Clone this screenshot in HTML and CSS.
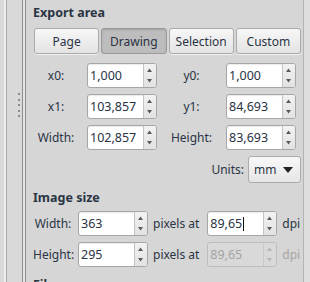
FILE: index.html
```html
<!DOCTYPE html>
<html lang="en">
<head>
<meta charset="UTF-8" />
<title>Export PNG Image</title>
<link rel="stylesheet" href="styles.css">
</head>
<body>
<div class="window">
  <div class="edge"></div>
  <div class="handle">
    <span></span><span></span><span></span><span></span><span></span>
  </div>
  <div class="divider"></div>
  <div class="panel">
    <h2>Export area</h2>
    <div class="modes">
      <button>Page</button>
      <button class="on">Drawing</button>
      <button>Selection</button>
      <button>Custom</button>
    </div>

    <div class="coords">
      <label>x0:</label>
      <div class="spin"><span class="val">1,000</span><span class="arrows"><svg width="12" height="23" viewBox="0 0 12 23"><path d="M3 8 L5.5 4.5 L8 8Z M3 15 L5.5 18.5 L8 15Z"/></svg></span></div>
      <label>y0:</label>
      <div class="spin"><span class="val">1,000</span><span class="arrows"><svg width="12" height="23" viewBox="0 0 12 23"><path d="M3 8 L5.5 4.5 L8 8Z M3 15 L5.5 18.5 L8 15Z"/></svg></span></div>

      <label>x1:</label>
      <div class="spin"><span class="val">103,857</span><span class="arrows"><svg width="12" height="23" viewBox="0 0 12 23"><path d="M3 8 L5.5 4.5 L8 8Z M3 15 L5.5 18.5 L8 15Z"/></svg></span></div>
      <label>y1:</label>
      <div class="spin"><span class="val">84,693</span><span class="arrows"><svg width="12" height="23" viewBox="0 0 12 23"><path d="M3 8 L5.5 4.5 L8 8Z M3 15 L5.5 18.5 L8 15Z"/></svg></span></div>

      <label>Width:</label>
      <div class="spin"><span class="val">102,857</span><span class="arrows"><svg width="12" height="23" viewBox="0 0 12 23"><path d="M3 8 L5.5 4.5 L8 8Z M3 15 L5.5 18.5 L8 15Z"/></svg></span></div>
      <label>Height:</label>
      <div class="spin"><span class="val">83,693</span><span class="arrows"><svg width="12" height="23" viewBox="0 0 12 23"><path d="M3 8 L5.5 4.5 L8 8Z M3 15 L5.5 18.5 L8 15Z"/></svg></span></div>
    </div>

    <div class="units">
      <label>Units:</label>
      <div class="combo">mm <svg width="10" height="6" viewBox="0 0 10 6"><path d="M0 0 L10 0 L5 6Z"/></svg></div>
    </div>

    <h2 class="second">Image size</h2>
    <div class="size">
      <label>Width:</label>
      <div class="spin"><span class="val">363</span><span class="arrows"><svg width="12" height="23" viewBox="0 0 12 23"><path d="M3 8 L5.5 4.5 L8 8Z M3 15 L5.5 18.5 L8 15Z"/></svg></span></div>
      <span>pixels at</span>
      <div class="spin"><span class="val">89,65<i class="caret"></i></span><span class="arrows"><svg width="12" height="23" viewBox="0 0 12 23"><path d="M3 8 L5.5 4.5 L8 8Z M3 15 L5.5 18.5 L8 15Z"/></svg></span></div>
      <span>dpi</span>

      <label>Height:</label>
      <div class="spin"><span class="val">295</span><span class="arrows"><svg width="12" height="23" viewBox="0 0 12 23"><path d="M3 8 L5.5 4.5 L8 8Z M3 15 L5.5 18.5 L8 15Z"/></svg></span></div>
      <span>pixels at</span>
      <div class="spin off"><span class="val">89,65</span><span class="arrows"><svg width="12" height="23" viewBox="0 0 12 23"><path d="M3 8 L5.5 4.5 L8 8Z M3 15 L5.5 18.5 L8 15Z"/></svg></span></div>
      <span class="dim">dpi</span>
    </div>

    <h2 class="third">Filename</h2>
  </div>
  <div class="rim"></div>
</div>
</body>
</html>
```

FILE: styles.css
```css
body { margin: 0; background: #d9d9d9; font-family: "Noto Sans", sans-serif; font-size: 12px; color: #2a3444; }
.window { display: flex; height: 282px; overflow: hidden; }

.edge { width: 4px; flex: none; border-right: 2px solid #eeeeee; box-sizing: content-box; }
.handle { width: 13px; flex: none; border-left: 1px solid #a9a9a9; display: flex; flex-direction: column; align-items: flex-end; padding: 93px 2px 0 0; gap: 3.5px; }
.handle span { width: 2px; height: 2px; background: #8c8c8c; }
.divider { width: 2px; flex: none; border-left: 1px solid #8e8e8e; border-right: 1px solid #8e8e8e; background: #e4e4e4; }

.panel { width: 270px; flex: none; padding-left: 7px; background: #d6d6d6; border-right: 1px solid #b4b4b4; white-space: nowrap; }
.rim { flex: 1; background: #dedede; }

h2 { font-size: 12.5px; font-weight: bold; margin: 4px 0 0; line-height: 18px; }
h2.second { margin-top: 6px; }
h2.third { margin-top: 9px; }

.modes { display: grid; grid-template-columns: repeat(4, 1fr); gap: 2px; margin: 6px 0 0 1px; width: 267px; }
.modes button { height: 26px; font: inherit; color: inherit; padding: 0; border: 1px solid #ababab; border-radius: 3px; background: linear-gradient(#f7f7f7, #e3e3e3); box-shadow: 0 1px 0 rgba(255,255,255,0.6); }
.modes button.on { background: #bdbdbd; border-color: #9a9a9a; box-shadow: inset 0 1px 2px rgba(0,0,0,0.15); }

.coords { display: grid; grid-template-columns: 46px 70px 53px 70px; column-gap: 8px; row-gap: 6px; margin-top: 9px; align-items: center; }
.coords label, .size label { text-align: center; }

.spin { display: flex; height: 25px; box-sizing: border-box; border: 1px solid #a6a6a6; border-radius: 3px; background: #ffffff; box-shadow: inset 0 1px 1px rgba(0,0,0,0.08); overflow: hidden; }
.spin .val { flex: 1; padding-left: 2px; line-height: 23px; font-size: 12.5px; }
.spin .arrows { width: 12px; border-left: 1px solid #c4c4c4; background: linear-gradient(#f2f2f2, #e2e2e2); }
.spin svg { display: block; fill: #5a5a5a; }
.spin.off { background: #d9d9d9; border-color: #bdbdbd; box-shadow: none; color: #a4a4a4; }
.spin.off .arrows { background: #d9d9d9; border-left-color: #c8c8c8; }
.spin.off svg { fill: #b5b5b5; }
.caret { display: inline-block; width: 1px; height: 14px; background: #111; vertical-align: -3px; margin-left: 1px; }

.units { display: flex; justify-content: flex-end; align-items: center; gap: 4px; margin: 6px 0 0; width: 268px; }
.combo { width: 53px; height: 27px; box-sizing: border-box; border: 1px solid #ababab; border-radius: 3px; background: linear-gradient(#f8f8f8, #e6e6e6); display: flex; align-items: center; justify-content: space-between; padding: 0 7px 0 5px; }
.combo svg { fill: #222; }

.size { display: grid; grid-template-columns: 40px 70px auto 70px auto; column-gap: 5px; row-gap: 6px; margin-top: 4px; align-items: center; }
.size .dim { color: #a4a4a4; }
```
